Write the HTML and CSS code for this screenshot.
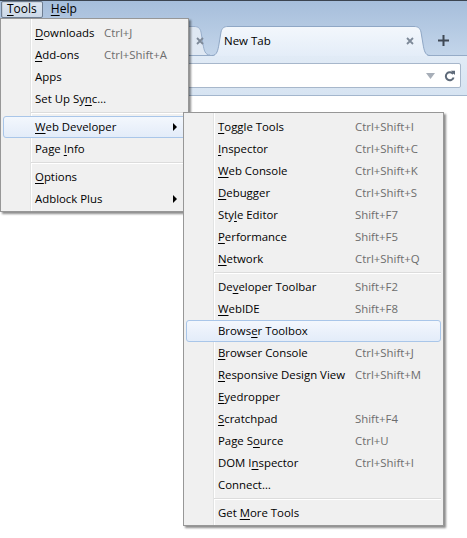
FILE: index.html
```html
<!DOCTYPE html>
<html>
<head>
<meta charset="utf-8">
<title>Tools menu</title>
<link rel="stylesheet" href="styles.css">
</head>
<body>
<div class="window">
  <div class="titlebar">
    <div class="menubar">
      <span class="mb-item mb-open"><u>T</u>ools</span>
      <span class="mb-item"><u>H</u>elp</span>
    </div>
    <div class="tabstrip">
      <div class="tab tab-bg">
        <svg class="tab-shape" width="230" height="29" viewBox="0 0 230 29">
          <path d="M0,29 L0,0.5 L208,0.5 C212,0.5 214,2 215,6 L217,18 C218,24 219,29 224,29 Z" fill="#dfe8f3"/>
          <path d="M0,0.5 L208,0.5 C212,0.5 214,2 215,6 L217,18 C218,24 219,29 224,29" fill="none" stroke="#98aecb"/>
        </svg>
        <span class="tab-title"></span>
        <svg class="tab-close" width="8" height="8" viewBox="0 0 8 8"><path d="M1,1 L7,7 M7,1 L1,7" stroke="#7d8998" stroke-width="1.8"/></svg>
      </div>
      <div class="tab tab-sel">
        <svg class="tab-shape" width="218" height="30" viewBox="0 0 218 30">
          <defs>
            <linearGradient id="tg" x1="0" y1="0" x2="0" y2="1">
              <stop offset="0" stop-color="#f3f7fc"/>
              <stop offset="1" stop-color="#e4edf8"/>
            </linearGradient>
          </defs>
          <path d="M0,30 C5,30 6,24 7,18 L9,6 C10,2 12,0.5 16,0.5 L202,0.5 C206,0.5 208,2 209,6 L211,18 C212,24 213,30 218,30 Z" fill="url(#tg)"/>
          <path d="M0,29.5 C5,29.5 6,24 7,18 L9,6 C10,2 12,0.5 16,0.5 L202,0.5 C206,0.5 208,2 209,6 L211,18 C212,24 213,29.5 218,29.5" fill="none" stroke="#8fa7c5"/>
        </svg>
        <span class="tab-title">New Tab</span>
        <svg class="tab-close" width="8" height="8" viewBox="0 0 8 8"><path d="M1,1 L7,7 M7,1 L1,7" stroke="#7d8998" stroke-width="1.8"/></svg>
      </div>
      <div class="newtab">
        <svg width="11" height="11" viewBox="0 0 11 11"><path d="M5.5,0 V11 M0,5.5 H11" stroke="#3f4854" stroke-width="2"/></svg>
      </div>
    </div>
  </div>
  <div class="navbar">
    <div class="urlbar">
      <svg class="dropmarker" width="9" height="6" viewBox="0 0 9 6"><path d="M0,0 H9 L4.5,6 Z" fill="#a7aeb8"/></svg>
      <svg class="reload" width="12" height="12" viewBox="0 0 12 12">
        <path d="M9.2,4 A4,4 0 1 0 9.6,7.5" fill="none" stroke="#5d6978" stroke-width="2"/>
        <path d="M6.8,0.8 L11,0.8 L11,5 Z" fill="#5d6978"/>
      </svg>
    </div>
  </div>
  <div class="content"></div>
</div>

<div class="menu menu-main">
  <div class="mi"><span class="lbl"><u>D</u>ownloads</span><span class="key">Ctrl+J</span></div>
  <div class="mi"><span class="lbl"><u>A</u>dd-ons</span><span class="key">Ctrl+Shift+A</span></div>
  <div class="mi"><span class="lbl">Apps</span></div>
  <div class="mi"><span class="lbl">Set Up Sy<u>n</u>c…</span></div>
  <div class="msep"></div>
  <div class="mi hl"><span class="lbl"><u>W</u>eb Developer</span><span class="arrow"></span></div>
  <div class="mi"><span class="lbl">Page <u>I</u>nfo</span></div>
  <div class="msep"></div>
  <div class="mi"><span class="lbl"><u>O</u>ptions</span></div>
  <div class="mi"><span class="lbl">Adblock Plus</span><span class="arrow"></span></div>
</div>

<div class="menu menu-sub">
  <div class="mi"><span class="lbl"><u>T</u>oggle Tools</span><span class="key">Ctrl+Shift+I</span></div>
  <div class="mi"><span class="lbl"><u>I</u>nspector</span><span class="key">Ctrl+Shift+C</span></div>
  <div class="mi"><span class="lbl"><u>W</u>eb Console</span><span class="key">Ctrl+Shift+K</span></div>
  <div class="mi"><span class="lbl"><u>D</u>ebugger</span><span class="key">Ctrl+Shift+S</span></div>
  <div class="mi"><span class="lbl">Sty<u>l</u>e Editor</span><span class="key">Shift+F7</span></div>
  <div class="mi"><span class="lbl"><u>P</u>erformance</span><span class="key">Shift+F5</span></div>
  <div class="mi"><span class="lbl"><u>N</u>etwork</span><span class="key">Ctrl+Shift+Q</span></div>
  <div class="msep"></div>
  <div class="mi"><span class="lbl">De<u>v</u>eloper Toolbar</span><span class="key">Shift+F2</span></div>
  <div class="mi"><span class="lbl"><u>W</u>ebIDE</span><span class="key">Shift+F8</span></div>
  <div class="mi hl"><span class="lbl">Brows<u>e</u>r Toolbox</span></div>
  <div class="mi"><span class="lbl"><u>B</u>rowser Console</span><span class="key">Ctrl+Shift+J</span></div>
  <div class="mi"><span class="lbl"><u>R</u>esponsive Design View</span><span class="key">Ctrl+Shift+M</span></div>
  <div class="mi"><span class="lbl"><u>E</u>yedropper</span></div>
  <div class="mi"><span class="lbl"><u>S</u>cratchpad</span><span class="key">Shift+F4</span></div>
  <div class="mi"><span class="lbl">Page S<u>o</u>urce</span><span class="key">Ctrl+U</span></div>
  <div class="mi"><span class="lbl">DOM I<u>n</u>spector</span><span class="key">Ctrl+Shift+I</span></div>
  <div class="mi"><span class="lbl">Connect…</span></div>
  <div class="msep"></div>
  <div class="mi"><span class="lbl">Get <u>M</u>ore Tools</span></div>
</div>
</body>
</html>
```

FILE: styles.css
```css
* { box-sizing: border-box; }
html, body { margin: 0; padding: 0; }
body {
  width: 467px;
  height: 538px;
  overflow: hidden;
  position: relative;
  background: #fff;
  font-family: "Open Sans", "Segoe UI", "Noto Sans", sans-serif;
  font-size: 11.4px;
  color: #000;
}
u { text-decoration: underline; text-underline-offset: 2px; }

.window {
  display: flex;
  flex-direction: column;
  height: 538px;
  border-top: 1px solid #3b4450;
}

.titlebar {
  display: flex;
  flex-direction: column;
  background: linear-gradient(#a6bedb, #c3d5ea);
}

.menubar {
  height: 17px;
  display: flex;
  gap: 2px;
  padding-left: 1px;
}
.mb-item {
  padding: 0 5px;
  border: 1px solid transparent;
  border-radius: 2px;
  line-height: 14px;
  font-size: 12px;
}
.mb-open {
  border-color: #6e7e92;
  background: linear-gradient(#dfe7f1, #cbd8e7);
  box-shadow: inset 1px 1px 0 rgba(0, 0, 0, 0.08);
}

.tabstrip {
  display: flex;
  align-items: flex-end;
  padding-top: 8px;
}
.tab {
  position: relative;
  display: flex;
  align-items: center;
  flex: none;
}
.tab-shape {
  position: absolute;
  left: 0;
  top: 0;
}
.tab-title, .tab-close { position: relative; }
.tab-bg {
  width: 230px;
  height: 29px;
  margin-left: -14px;
}
.tab-bg .tab-title { flex: 1; }
.tab-bg .tab-close { margin-right: 12px; }
.tab-sel {
  width: 218px;
  height: 30px;
  margin-left: -4px;
  margin-bottom: -1px;
  z-index: 1;
}
.tab-sel .tab-title {
  flex: 1;
  padding-left: 12px;
  padding-bottom: 1px;
  font-size: 11.5px;
}
.tab-sel .tab-close { margin-right: 16px; }
.newtab {
  width: 26px;
  height: 29px;
  display: flex;
  align-items: center;
  justify-content: center;
}

.navbar {
  border-top: 1px solid #95abc7;
  border-bottom: 1px solid #a3b6cd;
  background: linear-gradient(#e1ebf6, #d7e4f2);
  padding: 7px 6px 7px 6px;
  display: flex;
  justify-content: flex-end;
}
.urlbar {
  width: 100%;
  height: 25px;
  background: #fff;
  border: 1px solid #a7b7cb;
  border-radius: 2px;
  display: flex;
  align-items: center;
  justify-content: flex-end;
  gap: 9px;
  padding-right: 4px;
}
.content { flex: 1; background: #fff; }

/* Menus (overlay) */
.menu {
  position: absolute;
  border: 1px solid #979797;
  padding: 3px 2px 1px 2px;
  background-color: #f0f0f0;
  background-image: linear-gradient(to right, transparent 29px, #e2e3e3 29px, #e2e3e3 30px, #ffffff 30px, #ffffff 31px, transparent 31px);
  background-repeat: no-repeat;
  box-shadow: 2px 2px 2px rgba(0, 0, 0, 0.45);
}
.menu-main { left: 0; top: 18px; width: 189px; --lw: 69px; }
.menu-sub { left: 183px; top: 112px; width: 261px; --lw: 137px; }

.mi {
  height: 22px;
  display: flex;
  align-items: center;
  border: 1px solid transparent;
  border-radius: 3px;
  padding-left: 31px;
  padding-right: 8px;
  padding-bottom: 2px;
  white-space: nowrap;
}
.mi.hl {
  border-color: #a9c6e9;
  background: linear-gradient(#f3f7fd, #e3ecf9);
}
.lbl { flex: none; width: var(--lw); }
.key { color: #6d6d6d; }
.arrow {
  margin-left: auto;
  margin-top: 2px;
  width: 0;
  height: 0;
  border-left: 4px solid #000;
  border-top: 4px solid transparent;
  border-bottom: 4px solid transparent;
}
.msep {
  height: 6px;
  margin-left: 28px;
  background: linear-gradient(transparent 2px, #dcdcdc 2px, #dcdcdc 3px, #ffffff 3px, #ffffff 4px, transparent 4px);
}
```
